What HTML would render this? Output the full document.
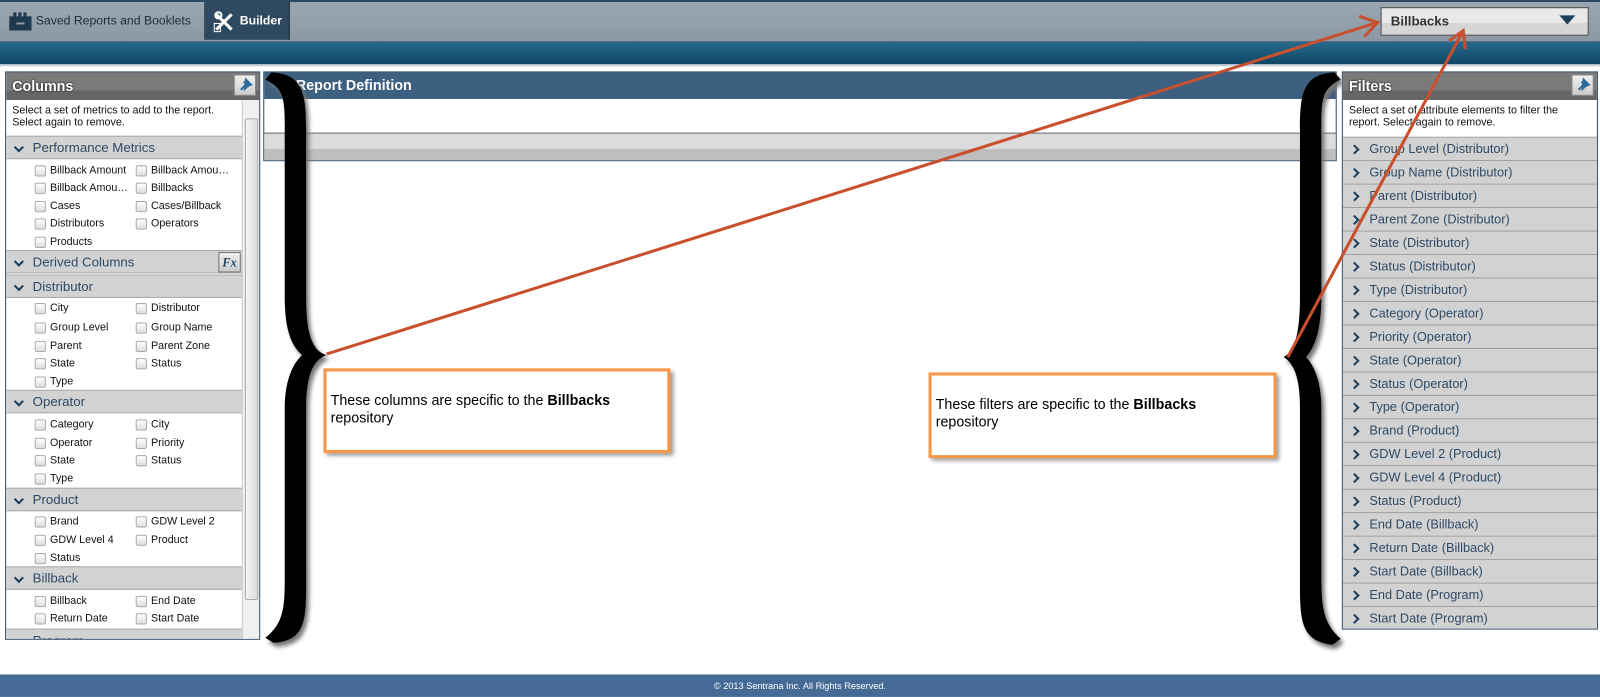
<!DOCTYPE html>
<html><head><meta charset="utf-8"><style>
*{box-sizing:border-box;margin:0;padding:0}
html,body{width:1600px;height:697px;overflow:hidden;background:#fff}
body{font-family:"Liberation Sans",Arial,sans-serif}
#wrap{position:absolute;left:0;top:0;width:1568px;height:683px;transform:scale(1.0204);transform-origin:0 0}
.abs{position:absolute}
#top{left:0;top:0;width:1568px;height:41px;background:linear-gradient(#9aa6b0,#8c98a3);border-top:2px solid #2c4a64;border-bottom:1px solid #4a5b6a}
#band{left:0;top:41px;width:1568px;height:24px;background:linear-gradient(#2a6a8c,#0d4664);border-bottom:2px solid #c8d0d8}
.tab{top:2px;height:37px;font-size:12px;line-height:37px}
.panel{border:1px solid #2c4a6a;background:#fff}
.ph{height:27px;background:linear-gradient(#7a7a7a 65%,#666 65%);color:#fff;font-weight:bold;font-size:14px;line-height:26px;padding-left:6px;text-shadow:0 0 2px #000}
.pin{position:absolute;top:2px;right:3px;width:22px;height:21px;background:linear-gradient(#f0f0f0,#ccc);border:1px solid #888}
.desc{font-size:10.5px;line-height:12px;color:#111;padding:4px 6px;height:36px}
.sec{position:absolute;left:0;width:231px;height:23px;background:#d2d2d2;border-top:1px solid #aaa;border-bottom:1px solid #aaa;font-size:13px;color:#2d4a66;line-height:21px;padding-left:26px}
.sec:before,.fr:before{content:"";position:absolute;left:9px;top:7px;width:5px;height:5px;border-right:2.5px solid #1c3f5c;border-bottom:2.5px solid #1c3f5c;transform:rotate(45deg)}
.cb{position:absolute;font-size:10.5px;color:#111;padding-left:15px;line-height:12px;white-space:nowrap}
.cb:before{content:"";position:absolute;left:0;top:1px;width:9px;height:9px;border:1px solid #aaa;background:linear-gradient(#fff,#ddd);border-radius:2px}
.fr{position:absolute;left:0;width:249px;height:23px;background:#d2d2d2;border-bottom:1px solid #999;font-size:12.5px;color:#2d4a66;line-height:22px;padding-left:26px}
.fr:before{transform:rotate(-45deg);top:8px;left:8px}
.call{border:3px solid #f79646;background:#fff;box-shadow:3px 3px 4px #999;font-size:14px;color:#000;padding:20px 4px 0 4px;line-height:17px}
</style></head><body><div id="wrap">
<div id="top" class="abs"></div>
<div class="abs tab" style="left:0;width:200px;color:#1c2c3c;padding-left:35px">Saved Reports and Booklets</div>
<svg class="abs" style="left:9px;top:12px" width="22" height="18"><rect x="0" y="4" width="22" height="14" fill="#1e3a50"/><rect x="4" y="0" width="3" height="5" fill="#1e3a50"/><rect x="9" y="0" width="3" height="5" fill="#1e3a50"/><rect x="14" y="0" width="3" height="5" fill="#1e3a50"/><rect x="7" y="10" width="8" height="2" fill="#8c98a3"/></svg>
<div class="abs tab" style="left:200px;width:84px;background:#2f4a60;color:#fff;font-weight:bold;padding-left:35px;border-right:1px solid #1a2a38">Builder</div>
<svg class="abs" style="left:209px;top:10px" width="22" height="22"><path d="M3 4 L18 19 M18 4 L3 19" stroke="#fff" stroke-width="3"/><circle cx="5" cy="5" r="3" fill="none" stroke="#fff" stroke-width="2"/><rect x="1" y="13" width="6" height="8" fill="none" stroke="#fff"/></svg>
<div class="abs" style="left:1353px;top:7px;width:204px;height:28px;background:linear-gradient(#e8e8e8 55%,#d6d6d6 55%);border:1px solid #555;font-size:13px;font-weight:bold;color:#333;line-height:26px;padding-left:9px">Billbacks</div>
<svg class="abs" style="left:1528px;top:15px" width="16" height="10"><path d="M0 0H16L8 9Z" fill="#1c3f5c"/></svg>
<div id="band" class="abs"></div>

<div class="abs panel" style="left:5px;top:70px;width:250px;height:557px;overflow:hidden">
<div class="ph">Columns</div><div class="pin"><svg width="20" height="19"><path d="M6 14L10 10M9 6L14 11M11 4L16 9L13 10L10 13Z" stroke="#2a6a9c" stroke-width="2" fill="#2a6a9c"/></svg></div>
<div class="desc">Select a set of metrics to add to the report.<br>Select again to remove.</div>
<div style="position:absolute;right:0;top:27px;width:17px;height:530px;background:#f0f0f0;border-left:1px solid #ccc"><div style="position:absolute;left:2px;top:18px;width:13px;height:472px;background:linear-gradient(90deg,#f4f4f4,#ddd);border:1px solid #aaa;border-radius:2px"></div></div>
<div class="sec" style="top:62px">Performance Metrics</div>
<div class="cb" style="left:28px;top:90px">Billback Amount</div><div class="cb" style="left:127px;top:90px">Billback Amou…</div>
<div class="cb" style="left:28px;top:107px">Billback Amou…</div><div class="cb" style="left:127px;top:107px">Billbacks</div>
<div class="cb" style="left:28px;top:125px">Cases</div><div class="cb" style="left:127px;top:125px">Cases/Billback</div>
<div class="cb" style="left:28px;top:142px">Distributors</div><div class="cb" style="left:127px;top:142px">Operators</div>
<div class="cb" style="left:28px;top:160px">Products</div>
<div class="sec" style="top:174px">Derived Columns<div style="position:absolute;right:1px;top:1px;width:22px;height:20px;background:linear-gradient(#f0f0f0,#ccc);border:1px solid #777;font:italic bold 12px 'Liberation Serif',serif;color:#1c3f5c;text-align:center;line-height:18px">Fx</div></div>
<div class="sec" style="top:198px">Distributor</div>
<div class="cb" style="left:28px;top:225px">City</div><div class="cb" style="left:127px;top:225px">Distributor</div>
<div class="cb" style="left:28px;top:244px">Group Level</div><div class="cb" style="left:127px;top:244px">Group Name</div>
<div class="cb" style="left:28px;top:262px">Parent</div><div class="cb" style="left:127px;top:262px">Parent Zone</div>
<div class="cb" style="left:28px;top:279px">State</div><div class="cb" style="left:127px;top:279px">Status</div>
<div class="cb" style="left:28px;top:297px">Type</div>
<div class="sec" style="top:311px">Operator</div>
<div class="cb" style="left:28px;top:339px">Category</div><div class="cb" style="left:127px;top:339px">City</div>
<div class="cb" style="left:28px;top:357px">Operator</div><div class="cb" style="left:127px;top:357px">Priority</div>
<div class="cb" style="left:28px;top:374px">State</div><div class="cb" style="left:127px;top:374px">Status</div>
<div class="cb" style="left:28px;top:392px">Type</div>
<div class="sec" style="top:407px">Product</div>
<div class="cb" style="left:28px;top:434px">Brand</div><div class="cb" style="left:127px;top:434px">GDW Level 2</div>
<div class="cb" style="left:28px;top:452px">GDW Level 4</div><div class="cb" style="left:127px;top:452px">Product</div>
<div class="cb" style="left:28px;top:470px">Status</div>
<div class="sec" style="top:484px">Billback</div>
<div class="cb" style="left:28px;top:512px">Billback</div><div class="cb" style="left:127px;top:512px">End Date</div>
<div class="cb" style="left:28px;top:529px">Return Date</div><div class="cb" style="left:127px;top:529px">Start Date</div>
<div class="sec" style="top:545px">Program</div>
</div>

<div class="abs panel" style="left:258px;top:70px;width:1052px;height:88px">
<div style="height:26px;background:#3d5f80;color:#fff;font-weight:bold;font-size:14px;line-height:24px;padding-left:31px">Report Definition</div>
<div style="height:34px;border-bottom:1px solid #555"></div>
<div style="height:15px;background:#dcdcdc"></div><div style="height:11px;background:#bebebe"></div>
</div>

<div class="abs panel" style="left:1315px;top:70px;width:251px;height:547px;overflow:hidden">
<div class="ph">Filters</div><div class="pin"><svg width="20" height="19"><path d="M6 14L10 10M9 6L14 11M11 4L16 9L13 10L10 13Z" stroke="#2a6a9c" stroke-width="2" fill="#2a6a9c"/></svg></div>
<div class="desc" style="padding-right:12px">Select a set of attribute elements to filter the report. Select again to remove.</div>
<div style="position:absolute;left:0;top:63px;width:249px;border-top:1px solid #999">
<div class="fr" style="top:0">Group Level (Distributor)</div>
<div class="fr" style="top:23px">Group Name (Distributor)</div>
<div class="fr" style="top:46px">Parent (Distributor)</div>
<div class="fr" style="top:69px">Parent Zone (Distributor)</div>
<div class="fr" style="top:92px">State (Distributor)</div>
<div class="fr" style="top:115px">Status (Distributor)</div>
<div class="fr" style="top:138px">Type (Distributor)</div>
<div class="fr" style="top:161px">Category (Operator)</div>
<div class="fr" style="top:184px">Priority (Operator)</div>
<div class="fr" style="top:207px">State (Operator)</div>
<div class="fr" style="top:230px">Status (Operator)</div>
<div class="fr" style="top:253px">Type (Operator)</div>
<div class="fr" style="top:276px">Brand (Product)</div>
<div class="fr" style="top:299px">GDW Level 2 (Product)</div>
<div class="fr" style="top:322px">GDW Level 4 (Product)</div>
<div class="fr" style="top:345px">Status (Product)</div>
<div class="fr" style="top:368px">End Date (Billback)</div>
<div class="fr" style="top:391px">Return Date (Billback)</div>
<div class="fr" style="top:414px">Start Date (Billback)</div>
<div class="fr" style="top:437px">End Date (Program)</div>
<div class="fr" style="top:460px">Start Date (Program)</div>
</div></div>

<div class="abs call" style="left:317px;top:361px;width:340px;height:83px">These columns are specific to the <b>Billbacks</b> repository</div>
<div class="abs call" style="left:910px;top:365px;width:341px;height:84px;padding-right:40px">These filters are specific to the <b>Billbacks</b> repository</div>

<svg class="abs" style="left:0;top:0" width="1568" height="683">
<defs><filter id="s"><feDropShadow dx="3" dy="4" stdDeviation="2" flood-color="#777"/></filter></defs>
<path filter="url(#s)" fill="#000" d="M266 71 C302 72 300 100 300 140 L300 290 C300 330 307 344 320 348 C306 353 300 370 300 400 L300 560 C300 605 302 628 268 630 L260 625 C280 610 279 590 279 560 L279 400 C279 375 286 357 296 348 C286 339 279 325 279 290 L279 140 C279 100 281 88 260 78 Z"/>
<path filter="url(#s)" fill="#000" d="M1308 71 C1272 72 1274 100 1274 140 L1274 290 C1274 330 1268 344 1258 350 C1268 356 1274 370 1274 400 L1274 560 C1274 605 1272 628 1306 632 L1314 626 C1295 610 1295 590 1295 560 L1295 400 C1295 375 1288 358 1280 350 C1288 341 1295 325 1295 290 L1295 140 C1295 100 1293 88 1314 78 Z"/>
<g stroke="#c8502e" stroke-width="3" fill="none">
<path d="M320 347 L1350 22"/><path d="M1332 16 L1350 22 L1337 36"/>
<path d="M1262 350 L1434 30"/><path d="M1420 40 L1434 30 L1436 48"/>
</g></svg>

<div class="abs" style="left:0;top:661px;width:1568px;height:22px;background:#466a96;color:#fff;font-size:9px;text-align:center;line-height:22px">© 2013 Sentrana Inc. All Rights Reserved.</div>
</div></body></html>
